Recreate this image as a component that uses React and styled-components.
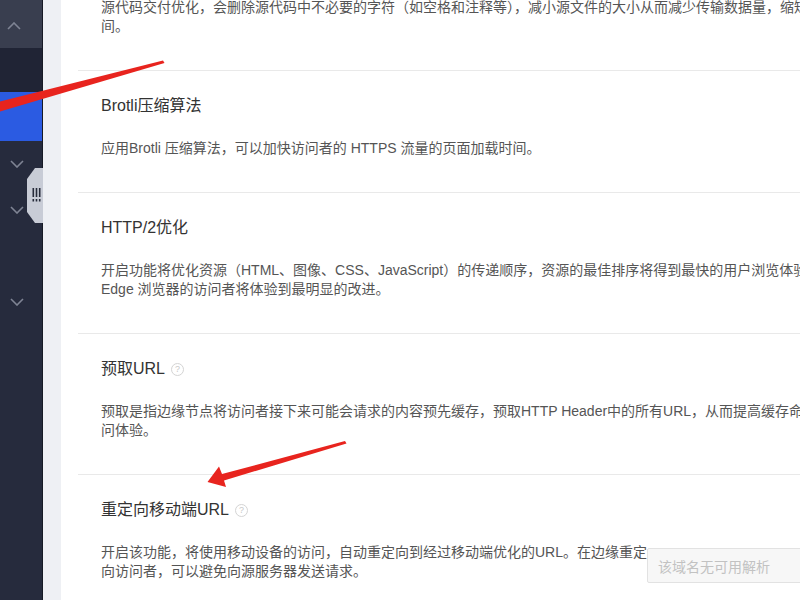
import styled, { createGlobalStyle } from "styled-components";

const GlobalStyle = createGlobalStyle`
  html, body {
    margin: 0;
    padding: 0;
    overflow: hidden;
    background: #eef0f4;
  }
  body {
    font-family: "Liberation Sans", "Noto Sans CJK SC", sans-serif;
  }
`;

const sections = [
  {
    title: "Brotli压缩算法",
    lines: ["应用Brotli 压缩算法，可以加快访问者的 HTTPS 流量的页面加载时间。"],
  },
  {
    title: "HTTP/2优化",
    lines: [
      "开启功能将优化资源（HTML、图像、CSS、JavaScript）的传递顺序，资源的最佳排序将得到最快的用户浏览体验，",
      "Edge 浏览器的访问者将体验到最明显的改进。",
    ],
  },
  {
    title: "预取URL",
    help: true,
    lines: [
      "预取是指边缘节点将访问者接下来可能会请求的内容预先缓存，预取HTTP Header中的所有URL，从而提高缓存命中",
      "问体验。",
    ],
  },
];

const Chevron = ({ up }) => (
  <svg width="14" height="8" viewBox="0 0 14 8">
    <polyline
      points={up ? "1,7 7,1 13,7" : "1,1 7,7 13,1"}
      fill="none"
      stroke="#7f8494"
      strokeWidth="1.6"
    />
  </svg>
);

const App = () => {
  return (
    <>
      <GlobalStyle />
      <Layout>
        <Sidebar>
          <TopBand>
            <Chevron up />
          </TopBand>
          <DarkBand />
          <ActiveItem />
          <MenuRow>
            <Chevron />
          </MenuRow>
          <MenuRow>
            <Chevron />
          </MenuRow>
          <MenuRow />
          <MenuRow>
            <Chevron />
          </MenuRow>
        </Sidebar>
        <ToggleTab>
          <svg width="9" height="15" viewBox="0 0 9 15">
            <rect x="0.5" y="0" width="1.6" height="9" fill="#262b3a" />
            <rect x="3.7" y="0" width="1.6" height="9" fill="#262b3a" />
            <rect x="6.9" y="0" width="1.6" height="9" fill="#262b3a" />
            <rect x="0.5" y="11" width="1.6" height="2.5" fill="#262b3a" />
            <rect x="3.7" y="11" width="1.6" height="2.5" fill="#262b3a" />
            <rect x="6.9" y="11" width="1.6" height="2.5" fill="#262b3a" />
          </svg>
        </ToggleTab>
        <Main>
          <Panel>
            <Section $first>
              <Desc>
                <Line>
                  源代码交付优化，会删除源代码中不必要的字符（如空格和注释等），减小源文件的大小从而减少传输数据量，缩短
                </Line>
                <Line>间。</Line>
              </Desc>
            </Section>
            {sections.map((s) => (
              <Section key={s.title}>
                <Title>
                  {s.title}
                  {s.help && <Help>?</Help>}
                </Title>
                <Desc>
                  {s.lines.map((l, i) => (
                    <Line key={i}>{l}</Line>
                  ))}
                </Desc>
              </Section>
            ))}
            <Section $last>
              <Title>
                重定向移动端URL
                <Help>?</Help>
              </Title>
              <DescRow>
                <Desc $width={536}>
                  <Line>开启该功能，将使用移动设备的访问，自动重定向到经过移动端优化的URL。在边缘重定</Line>
                  <Line>向访问者，可以避免向源服务器发送请求。</Line>
                </Desc>
                <SelectBox>该域名无可用解析</SelectBox>
              </DescRow>
            </Section>
          </Panel>
        </Main>
        <Arrows width="800" height="600" viewBox="0 0 800 600">
          <polygon points="163,60.5 164.5,63 0,111.5 0,101.5" fill="#e8241e" />
          <polygon
            points="345,441 346.5,443.5 224,480.5 226,487 207.5,482 219,466.5 222,474"
            fill="#e8241e"
          />
        </Arrows>
      </Layout>
    </>
  );
};

const Layout = styled.div`
  position: relative;
  display: flex;
  height: 100vh;
  width: 100vw;
  overflow: hidden;
`;

const Sidebar = styled.div`
  width: 42px;
  flex-shrink: 0;
  background: #262b3d;
  border-right: 1px solid #171a25;
  display: flex;
  flex-direction: column;
`;

const TopBand = styled.div`
  height: 48px;
  background: #393e4f;
  display: flex;
  align-items: center;
  padding-left: 7px;
  padding-top: 4px;
  box-sizing: border-box;
`;

const DarkBand = styled.div`
  height: 44px;
  background: #202435;
`;

const ActiveItem = styled.div`
  height: 49px;
  background: #2b5be2;
`;

const MenuRow = styled.div`
  height: 46px;
  display: flex;
  align-items: center;
  padding-left: 10px;
`;

const ToggleTab = styled.div`
  position: absolute;
  left: 27px;
  top: 168px;
  width: 16px;
  height: 55px;
  background: #c8ccd6;
  clip-path: polygon(8px 0, 100% 0, 100% 100%, 8px 100%, 0 calc(100% - 11px), 0 11px);
  display: flex;
  align-items: center;
  justify-content: center;
  padding-left: 2px;
  box-sizing: border-box;
`;

const Main = styled.div`
  flex: 1;
  padding-left: 18px;
  min-width: 0;
`;

const Panel = styled.div`
  background: #fff;
  height: 100%;
  padding-left: 17px;
  overflow: hidden;
`;

const Section = styled.div`
  margin-top: ${(p) => (p.$first ? "-2px" : "0")};
  padding: ${(p) => (p.$first ? "0" : "25px")} 0 34px 23px;
  border-bottom: ${(p) => (p.$last ? "none" : "1px solid #e9e9e9")};
`;

const Title = styled.div`
  display: flex;
  align-items: center;
  font-size: 16px;
  line-height: 20px;
  color: #333;
  margin-bottom: 23px;
`;

const Help = styled.span`
  display: inline-flex;
  align-items: center;
  justify-content: center;
  width: 11px;
  height: 11px;
  margin-left: 6px;
  border: 1px solid #d4d4d4;
  border-radius: 50%;
  color: #c8c8c8;
  font-size: 9px;
  line-height: 1;
`;

const Desc = styled.div`
  font-size: 14px;
  line-height: 19px;
  color: #555;
  width: ${(p) => (p.$width ? `${p.$width}px` : "auto")};
  flex-shrink: 0;
`;

const Line = styled.div`
  white-space: nowrap;
`;

const DescRow = styled.div`
  display: flex;
  gap: 10px;
  align-items: flex-start;
`;

const SelectBox = styled.div`
  margin-top: 5px;
  height: 35px;
  width: 200px;
  flex-shrink: 0;
  box-sizing: border-box;
  background: #f7f7f7;
  border: 1px solid #e2e2e2;
  border-radius: 2px;
  padding-left: 10px;
  display: flex;
  align-items: center;
  font-size: 14px;
  color: #c2c2c2;
`;

const Arrows = styled.svg`
  position: absolute;
  left: 0;
  top: 0;
  pointer-events: none;
`;

export default App;
